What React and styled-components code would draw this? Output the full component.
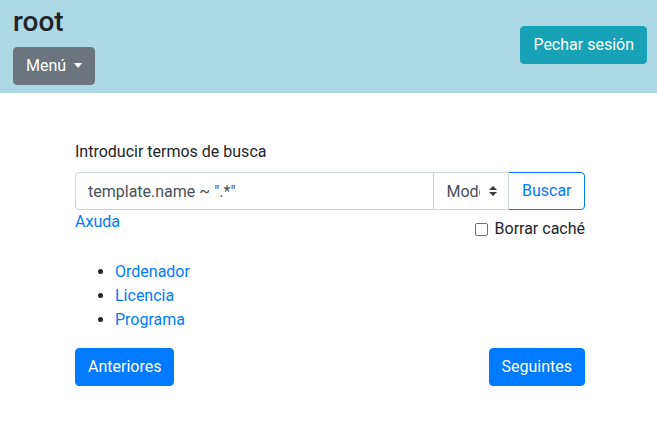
import React from "react"
import styled, { createGlobalStyle } from "styled-components"

const GlobalStyle = createGlobalStyle`
  body {
    margin: 0;
    font-family: Roboto, "Liberation Sans", sans-serif;
    font-size: 16px;
    line-height: 1.5;
    color: #212529;
    background: #fff;
  }
  * {
    box-sizing: border-box;
  }
`

const Header = styled.header`
  display: flex;
  align-items: center;
  justify-content: space-between;
  height: 93px;
  padding: 5px 10px 8px 13px;
  background-color: lightblue;
`

const Brand = styled.div`
  display: flex;
  flex-direction: column;
  align-items: flex-start;
`

const Title = styled.h3`
  margin: 0 0 8px;
  font-size: 28px;
  font-weight: 500;
  line-height: 1.2;
`

const Btn = styled.button`
  display: inline-flex;
  align-items: center;
  height: 38px;
  padding: 6px ${props => props.padX || "12px"};
  margin-left: ${props => props.shift || "0"};
  font-family: inherit;
  font-size: 16px;
  line-height: 1.5;
  color: ${props => (props.outline ? "#007bff" : "#fff")};
  background-color: ${props => (props.outline ? "#fff" : props.color || "#007bff")};
  border: 1px solid ${props => props.color || "#007bff"};
  border-radius: ${props => props.radius || "4px"};
  cursor: pointer;
`

const Caret = styled.span`
  display: inline-block;
  margin-left: 8px;
  border-top: 5px solid #fff;
  border-left: 4.5px solid transparent;
  border-right: 4.5px solid transparent;
`

const Main = styled.main`
  padding: 47px 0 0 75px;
`

const Content = styled.div`
  width: 510px;
`

const Label = styled.label`
  display: block;
  margin-bottom: 8px;
`

const InputGroup = styled.div`
  display: flex;
  height: 38px;
`

const TextInput = styled.input`
  flex: 1;
  min-width: 0;
  height: 38px;
  padding: 6px 12px;
  font-family: inherit;
  font-size: 16px;
  color: #495057;
  border: 1px solid #ced4da;
  border-radius: 4px 0 0 4px;
  outline: none;
`

const SelectWrap = styled.div`
  position: relative;
  width: 76px;
  margin-left: -1px;
`

const Select = styled.select`
  width: 100%;
  height: 100%;
  padding: 6px 28px 6px 12px;
  font-family: inherit;
  font-size: 16px;
  color: #495057;
  background: #fff;
  border: 1px solid #ced4da;
  border-radius: 0;
  appearance: none;
  outline: none;
`

const SelectArrows = styled.svg`
  position: absolute;
  right: 12px;
  top: 14px;
  pointer-events: none;
`

const HelpRow = styled.div`
  display: flex;
  justify-content: space-between;
  align-items: flex-start;
  margin-bottom: 19px;
`

const Link = styled.a`
  color: #007bff;
  text-decoration: none;
`

const CheckLabel = styled.label`
  display: flex;
  align-items: center;
  margin-top: 7px;
`

const Box = styled.span`
  width: 13px;
  height: 13px;
  margin-right: 7px;
  border: 1.5px solid #6c6f76;
  border-radius: 2px;
`

const List = styled.ul`
  margin: 0 0 16px;
  padding-left: 40px;
`

const Pager = styled.div`
  display: flex;
  justify-content: space-between;
`

const App = () => (
  <>
    <GlobalStyle />
    <Header>
      <Brand>
        <Title>root</Title>
        <Btn color="#6c757d">
          Menú
          <Caret />
        </Btn>
      </Brand>
      <Btn color="#17a2b8">Pechar sesión</Btn>
    </Header>
    <Main>
      <Content>
        <Label htmlFor="q">Introducir termos de busca</Label>
        <InputGroup>
          <TextInput id="q" defaultValue={'template.name ~ ".*"'} />
          <SelectWrap>
            <Select defaultValue="modelo">
              <option value="modelo">Modelo</option>
            </Select>
            <SelectArrows width="8" height="10" viewBox="0 0 8 10">
              <path d="M4 0L0 4h8zM4 10L0 6h8z" fill="#343a40" />
            </SelectArrows>
          </SelectWrap>
          <Btn outline padX="12.5px" shift="-1px" radius="0 4px 4px 0">
            Buscar
          </Btn>
        </InputGroup>
        <HelpRow>
          <Link href="#">Axuda</Link>
          <CheckLabel>
            <Box />
            Borrar caché
          </CheckLabel>
        </HelpRow>
        <List>
          <li><Link href="#">Ordenador</Link></li>
          <li><Link href="#">Licencia</Link></li>
          <li><Link href="#">Programa</Link></li>
        </List>
        <Pager>
          <Btn>Anteriores</Btn>
          <Btn>Seguintes</Btn>
        </Pager>
      </Content>
    </Main>
  </>
)

export default App
